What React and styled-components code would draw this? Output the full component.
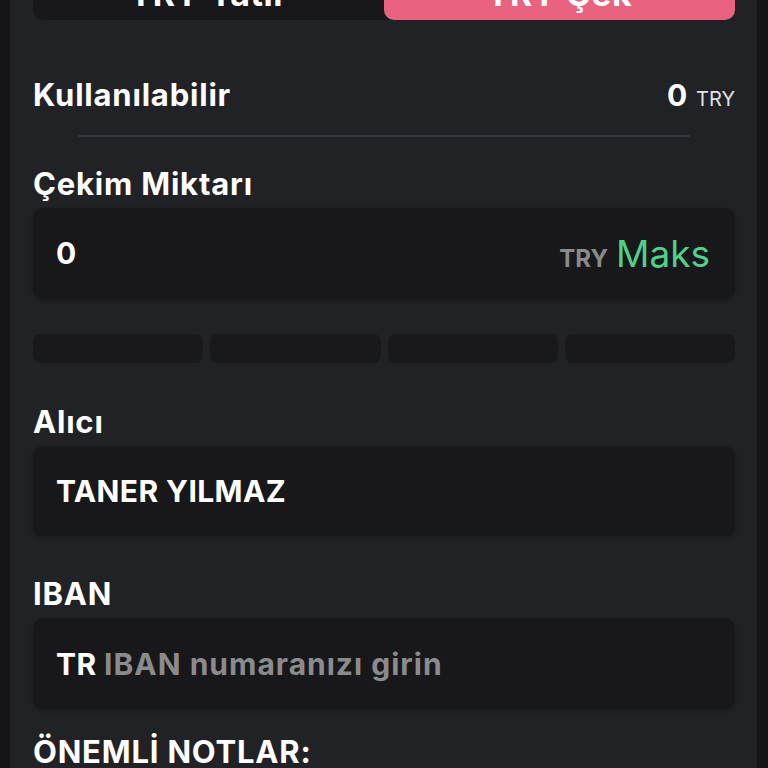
import React from "react";
import styled, { createGlobalStyle } from "styled-components";

const Global = createGlobalStyle`
  html, body { margin: 0; padding: 0; background: #151517; }
  body { font-family: "Inter", "Noto Sans", sans-serif; color: #fff; }
  * { box-sizing: border-box; }
`;

const Page = styled.div`
  height: 768px;
  overflow: hidden;
  padding: 0 11px 0 10px;
`;

const Panel = styled.div`
  background: #212226;
  height: 100%;
  padding: 0 22px 0 23px;
  display: flex;
  flex-direction: column;
`;

const Tabs = styled.div`
  margin-top: -36px;
  height: 56px;
  display: grid;
  grid-template-columns: 1fr 1fr;
  background: #18181a;
  border-radius: 10px;
`;

const Tab = styled.div`
  display: flex;
  align-items: center;
  justify-content: center;
  padding-top: 4px;
  border-radius: 10px;
  font-size: 34px;
  font-weight: 700;
  letter-spacing: 0.5px;
  color: #fff;
  background: ${(p) => (p.$active ? "#e9627f" : "transparent")};
`;

const BalanceRow = styled.div`
  margin-top: 57px;
  display: flex;
  align-items: baseline;
  justify-content: space-between;
`;

const Label = styled.div`
  font-size: 31px;
  line-height: 32px;
  font-weight: 700;
  letter-spacing: 0.8px;
  color: #fff;
  margin-top: ${(p) => p.$mt || 0}px;
`;

const Amount = styled.div`
  display: flex;
  align-items: baseline;
  gap: 9px;
`;

const AmountValue = styled.span`
  font-size: 30px;
  font-weight: 700;
`;

const AmountUnit = styled.span`
  font-size: 20px;
  font-weight: 400;
  color: #e2e2e4;
`;

const Divider = styled.div`
  margin: 22px 45px 0 45px;
  height: 2px;
  background: #35363b;
`;

const Field = styled.div`
  margin-top: 8px;
  height: 91px;
  background: #18181a;
  border-radius: 10px;
  box-shadow: 0 2px 4px rgba(0, 0, 0, 0.25);
  display: flex;
  align-items: center;
  justify-content: space-between;
  padding: 0 25px 0 23px;
`;

const FieldText = styled.div`
  font-size: 30px;
  font-weight: 700;
  letter-spacing: 0.4px;
  color: #fff;
`;

const Placeholder = styled.span`
  color: #8b8b8d;
  letter-spacing: 1px;
`;

const Suffix = styled.div`
  display: flex;
  align-items: baseline;
  gap: 8px;
`;

const Currency = styled.span`
  font-size: 24px;
  font-weight: 700;
  color: #8a8a8c;
`;

const MaxButton = styled.span`
  font-size: 37px;
  font-weight: 400;
  color: #4fd08b;
`;

const Quick = styled.div`
  margin-top: 35px;
  display: grid;
  grid-template-columns: repeat(4, 1fr);
  gap: 7px;
`;

const QuickButton = styled.div`
  height: 29px;
  background: #19191b;
  border-radius: 8px;
`;

export default function App() {
  return (
    <Page>
      <Global />
      <Panel>
        <Tabs>
          <Tab>TRY Yatır</Tab>
          <Tab $active>TRY Çek</Tab>
        </Tabs>
        <BalanceRow>
          <Label>Kullanılabilir</Label>
          <Amount>
            <AmountValue>0</AmountValue>
            <AmountUnit>TRY</AmountUnit>
          </Amount>
        </BalanceRow>
        <Divider />
        <Label $mt={31}>Çekim Miktarı</Label>
        <Field>
          <FieldText>0</FieldText>
          <Suffix>
            <Currency>TRY</Currency>
            <MaxButton>Maks</MaxButton>
          </Suffix>
        </Field>
        <Quick>
          <QuickButton />
          <QuickButton />
          <QuickButton />
          <QuickButton />
        </Quick>
        <Label $mt={43}>Alıcı</Label>
        <Field>
          <FieldText>TANER YILMAZ</FieldText>
        </Field>
        <Label $mt={42}>IBAN</Label>
        <Field>
          <FieldText>
            TR <Placeholder>IBAN numaranızı girin</Placeholder>
          </FieldText>
        </Field>
        <Label $mt={27}>ÖNEMLİ NOTLAR:</Label>
      </Panel>
    </Page>
  );
}
